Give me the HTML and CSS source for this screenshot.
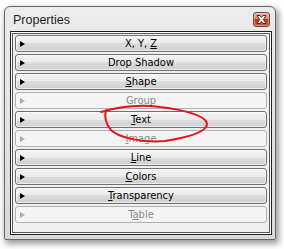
FILE: index.html
```html
<!DOCTYPE html>
<html lang="en">
<head>
    <meta charset="UTF-8">
    <title>Properties</title>
    <link rel="stylesheet" href="styles.css">
</head>
<body>
    <div class="screen">
        <div class="window">
            <div class="titlebar">
                <div class="title">Properties</div>
                <button class="close-btn" aria-label="Close">
                    <svg width="11" height="9" viewBox="0 0 11 9">
                        <path d="M1 0.5 L4 0.5 L5.5 2.5 L7 0.5 L10 0.5 L7.3 4.5 L10 8.5 L7 8.5 L5.5 6.5 L4 8.5 L1 8.5 L3.7 4.5 Z" fill="#fff" stroke="#5a2a22" stroke-width="1" stroke-linejoin="round"/>
                    </svg>
                </button>
            </div>
            <div class="panel">
                <div class="list">
                    <button class="row"><span class="arrow"></span><span class="label">X, Y, <u>Z</u></span></button>
                    <button class="row"><span class="arrow"></span><span class="label">Drop Shadow</span></button>
                    <button class="row"><span class="arrow"></span><span class="label"><u>S</u>hape</span></button>
                    <button class="row disabled"><span class="arrow"></span><span class="label">Group</span></button>
                    <button class="row"><span class="arrow"></span><span class="label"><u>T</u>ext</span></button>
                    <button class="row disabled"><span class="arrow"></span><span class="label"><u>I</u>mage</span></button>
                    <button class="row"><span class="arrow"></span><span class="label"><u>L</u>ine</span></button>
                    <button class="row"><span class="arrow"></span><span class="label"><u>C</u>olors</span></button>
                    <button class="row"><span class="arrow"></span><span class="label"><u>T</u>ransparency</span></button>
                    <button class="row disabled"><span class="arrow"></span><span class="label">T<u>a</u>ble</span></button>
                </div>
            </div>
        </div>

        <!-- hand drawn annotation over the Text row -->
        <svg class="markup" width="284" height="249" viewBox="0 0 284 249">
            <path d="M101 112 C118 107, 140 104, 160 107 C185 110, 207 116, 207 124 C207 132, 190 137, 165 141 C140 143, 118 137, 111 130 C106 124, 104 117, 106 110" fill="none" stroke="#e5141b" stroke-width="2" stroke-linecap="round"/>
        </svg>
    </div>
</body>
</html>
```

FILE: styles.css
```css
* {
    margin: 0;
    padding: 0;
    box-sizing: border-box;
}

body {
    background: #fff;
    width: 284px;
    height: 249px;
    overflow: hidden;
}

.screen {
    position: relative;
    width: 284px;
    height: 249px;
    padding: 6px 0 0 4px;
}

.window {
    width: 272px;
    height: 234px;
    border: 1px solid #666;
    border-radius: 6px 6px 2px 2px;
    background: linear-gradient(#ececec, #d9d9d9);
    box-shadow: 2px 3px 6px 1px rgba(0, 0, 0, 0.4);
    padding: 0 3px 4px 5px;
    display: flex;
    flex-direction: column;
}

.titlebar {
    height: 24px;
    display: flex;
    align-items: flex-start;
    justify-content: space-between;
}

.title {
    font-family: "Liberation Sans", Arial, sans-serif;
    font-size: 12.5px;
    line-height: 14px;
    color: #1e1e1e;
    padding: 6px 0 0 3px;
}

.close-btn {
    width: 17px;
    height: 15px;
    margin: 5px 2px 0 0;
    border: 1px solid #7b4035;
    border-radius: 3px;
    background: linear-gradient(#e8b0a3 0%, #d9826c 45%, #c2381f 50%, #cf5a3c 100%);
    box-shadow: inset 0 0 0 1px rgba(255, 255, 255, 0.35);
    display: flex;
    align-items: center;
    justify-content: center;
}

.panel {
    flex: 1;
    border: 1px solid #202020;
    background: #fff;
    padding: 1px;
    display: flex;
}

.list {
    flex: 1;
    border: 1px solid #585858;
    background: #f0f0f0;
    padding: 1px 2px;
    display: flex;
    flex-direction: column;
    gap: 2px;
}

.row {
    height: 17px;
    border: 1px solid #707070;
    border-radius: 3px;
    background: linear-gradient(#f3f3f3 0%, #ebebeb 50%, #dddddd 50%, #cfcfcf 100%);
    box-shadow: inset 0 0 0 1px rgba(255, 255, 255, 0.6);
    display: grid;
    grid-template-columns: 1fr auto 1fr;
    align-items: center;
    padding: 0 4px;
    font-family: "DejaVu Sans Condensed", "DejaVu Sans", sans-serif;
    font-size: 11px;
    line-height: 13px;
    color: #000;
}

.arrow {
    justify-self: start;
    width: 0;
    height: 0;
    border-left: 5px solid #000;
    border-top: 3.5px solid transparent;
    border-bottom: 3.5px solid transparent;
}

.label {
    grid-column: 2;
}

.label u {
    text-underline-offset: 1px;
}

.row.disabled {
    border-color: #adb2b5;
    background: #f4f4f4;
    box-shadow: none;
    color: #8a8a8a;
}

.row.disabled .arrow {
    border-left-color: #a8a8a8;
}

.markup {
    position: absolute;
    top: 0;
    left: 0;
    pointer-events: none;
}
```
